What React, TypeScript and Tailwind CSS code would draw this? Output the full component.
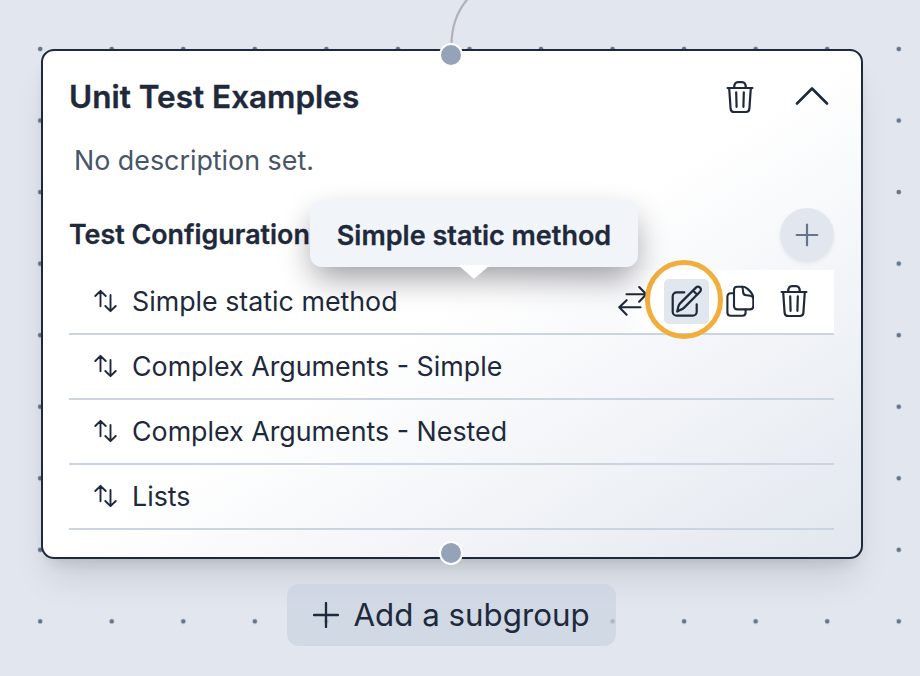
import type { ReactNode } from "react";

const tests = [
  "Simple static method",
  "Complex Arguments - Simple",
  "Complex Arguments - Nested",
  "Lists",
];

function Icon({ w, h, sw = 2, className = "", children }: { w: number; h: number; sw?: number; className?: string; children: ReactNode }) {
  return (
    <svg
      width={w}
      height={h}
      viewBox={`0 0 ${w} ${h}`}
      fill="none"
      stroke="currentColor"
      strokeWidth={sw}
      strokeLinecap="round"
      strokeLinejoin="round"
      className={`block shrink-0 ${className}`}
    >
      {children}
    </svg>
  );
}

function Trash() {
  return (
    <Icon w={28} h={34} sw={2.200}>
      <path d="M1.600 8h24.800M8.200 7.600C8.200 3.600 9.600 2.200 12 2.200h4c2.400 0 3.800 1.400 3.800 5.400M3.200 8.400l1.400 20.200c.2 2.200 1.400 3.400 3.400 3.400h12c2 0 3.200-1.200 3.400-3.400L24.800 8.400M10.200 12.300l.4 14.600M17.800 12.300l-.4 14.600" />
    </Icon>
  );
}

function Sort() {
  return (
    <Icon w={24} h={24} sw={1.900}>
      <path d="M6.500 17.300V2M1.300 7l5.200-5.200L11.700 7M16.500 6v15.500M11.300 17l5.200 5.200L21.700 17" />
    </Icon>
  );
}

function Swap() {
  return (
    <Icon w={30} h={32} sw={2.100}>
      <path d="M8.500 9.300h19.300M21.200 2l7 7.300-7 7.400M22.500 22.300H1.500M8.600 15.200l-7.300 7.100 7.300 7.400" />
    </Icon>
  );
}

function Edit() {
  return (
    <Icon w={32} h={32} sw={2.200}>
      <path d="M13.300 7.300H5.700a4 4 0 0 0-4 4v15.400a4 4 0 0 0 4 4h16a4 4 0 0 0 4-4v-7.400" />
      <path d="M6.200 26.500l1.200-5c.3-1.300.8-2.200 1.700-3.100L24.900 2.600c1.200-1.200 2.900-1.200 4.100 0s1.200 2.900 0 4.100L13.200 22.600c-.9.9-1.800 1.500-3.100 2zM22 5.500l4.200 4.200" />
    </Icon>
  );
}

function Copy() {
  return (
    <Icon w={28} h={32} sw={2.100}>
      <path d="M8 8.300H4.700c-2 0-3.300 1.300-3.300 3.300v15.800c0 2 1.300 3.300 3.300 3.300h11.600c2 0 3.300-1.300 3.300-3.300v-2.900" />
      <path d="M11.300 1.700h5.400c1.900 0 3.100.6 4.300 1.700 3.300 2.800 6 5.200 6.300 9.400v8.300c0 2-1.300 3.300-3.300 3.300H11.300c-2 0-3.300-1.300-3.300-3.300V5c0-2 1.300-3.300 3.300-3.300z" />
      <path d="M16 1.900c1 1.100 1.100 2.600 1.100 4.900 0 2.600.9 3.500 3.400 3.500 3.200 0 5.200.2 6.600 2.500" />
    </Icon>
  );
}

function Handle({ className }: { className: string }) {
  return <div className={`absolute left-[396px] size-6 rounded-full border-2 border-white bg-[#94a3b8] ${className}`} />;
}

export default function App() {
  return (
    <div className="relative h-[676px] w-[920px] overflow-hidden bg-[#e2e7ef] bg-[radial-gradient(circle_at_35.8px_35.8px,#64748b_1.9px,transparent_2.7px)] bg-[length:71.55px_71.55px] bg-[position:4.400px_13.200px] pl-[41px] pt-[49px] font-['Inter',sans-serif] text-[#1e293b]">
      <svg className="absolute left-0 top-0" width="500" height="50" fill="none">
        <path d="M451.500 45C451.500 26 457 11 468.500 -2" stroke="#b1b1b7" strokeWidth="2.200" />
      </svg>

      <section className="relative h-[510px] w-[822px] rounded-[13px] border-2 border-[#1e293b] bg-linear-to-br from-white via-white to-[#e2e7ef] px-[27px] shadow-[0_26px_36px_-8px_rgba(10,0,10,0.11),0_10px_16px_-8px_rgba(10,0,10,0.14)]">
        <Handle className="-top-[8px]" />
        <Handle className="-bottom-[8px]" />

        <header className="flex h-[92px] items-center">
          <h1 className="-ml-px text-[31.500px] font-semibold [-webkit-text-stroke:0.35px_#1e293b]">Unit Test Examples</h1>
          <div className="ml-auto flex items-center gap-[41px] pr-[5px]">
            <Trash />
            <Icon w={34} h={20} sw={2.600}>
              <path d="M2 16.500l15-15 15 15" />
            </Icon>
          </div>
        </header>

        <p className="flex h-9 items-center pb-[2px] pl-1 text-[26.830px] text-[#475569]">No description set.</p>

        <div className="mt-[29px] flex h-[54px] items-center justify-between">
          <h2 className="-ml-px pb-[2px] text-[26.830px] font-semibold [-webkit-text-stroke:0.3px_#1e293b]">Test Configurations</h2>
          <button className="flex size-[54px] items-center justify-center rounded-full bg-[#e2e7ef] text-[#64748b] shadow-[0_2px_4px_rgba(0,0,0,0.06)]">
            <Icon w={24} h={24} sw={2.200}>
              <path d="M12 1.700v20.600M1.700 12h20.600" />
            </Icon>
          </button>
        </div>

        <ul className="-ml-px pt-2">
          {tests.map((name, i) => (
            <li key={name} className="flex h-[64.900px] items-center border-b-2 border-[#cbd5e1] pl-[25px]">
              <Sort />
              <span className="pb-px pl-[14px] text-[26.800px]">{name}</span>
              {i === 0 && (
                <div className="ml-auto flex h-full w-[222px] items-center bg-linear-to-r from-white/0 via-white via-20% to-white pl-[6px]">
                  <Swap />
                  <span className="relative ml-[16px] flex size-[45px] items-center justify-center rounded-[5px] bg-[#e2e7ef]">
                    <Edit />
                    <span className="absolute -left-[19px] -top-[19px] h-[79px] w-[78px] rounded-full border-[5px] border-[#f2ae3d]" />
                  </span>
                  <span className="ml-[17px]"><Copy /></span>
                  <span className="ml-[26px]"><Trash /></span>
                </div>
              )}
            </li>
          ))}
        </ul>

        <div className="absolute left-[267px] top-[149px] flex h-[67px] w-[328px] items-center justify-center rounded-xl bg-[#f1f5fa] pt-[5px] text-[27px] font-semibold shadow-[0_14px_32px_-4px_rgba(15,10,25,0.42)] [-webkit-text-stroke:0.3px_#1e293b]">
          Simple static method
          <svg className="absolute left-[147px] top-[65px]" width="34" height="14">
            <path d="M1 0h32L17 14z" fill="white" />
          </svg>
        </div>
      </section>

      <button className="relative ml-[246px] mt-[25px] flex h-[62px] w-[329px] items-center justify-center gap-[14px] rounded-xl bg-[#cbd3e1]/70 pt-px text-[31.300px]">
        <Icon w={26} h={26} sw={2.300} className="-mt-px">
          <path d="M13 1v24M1 13h24" />
        </Icon>
        Add a subgroup
      </button>
    </div>
  );
}
